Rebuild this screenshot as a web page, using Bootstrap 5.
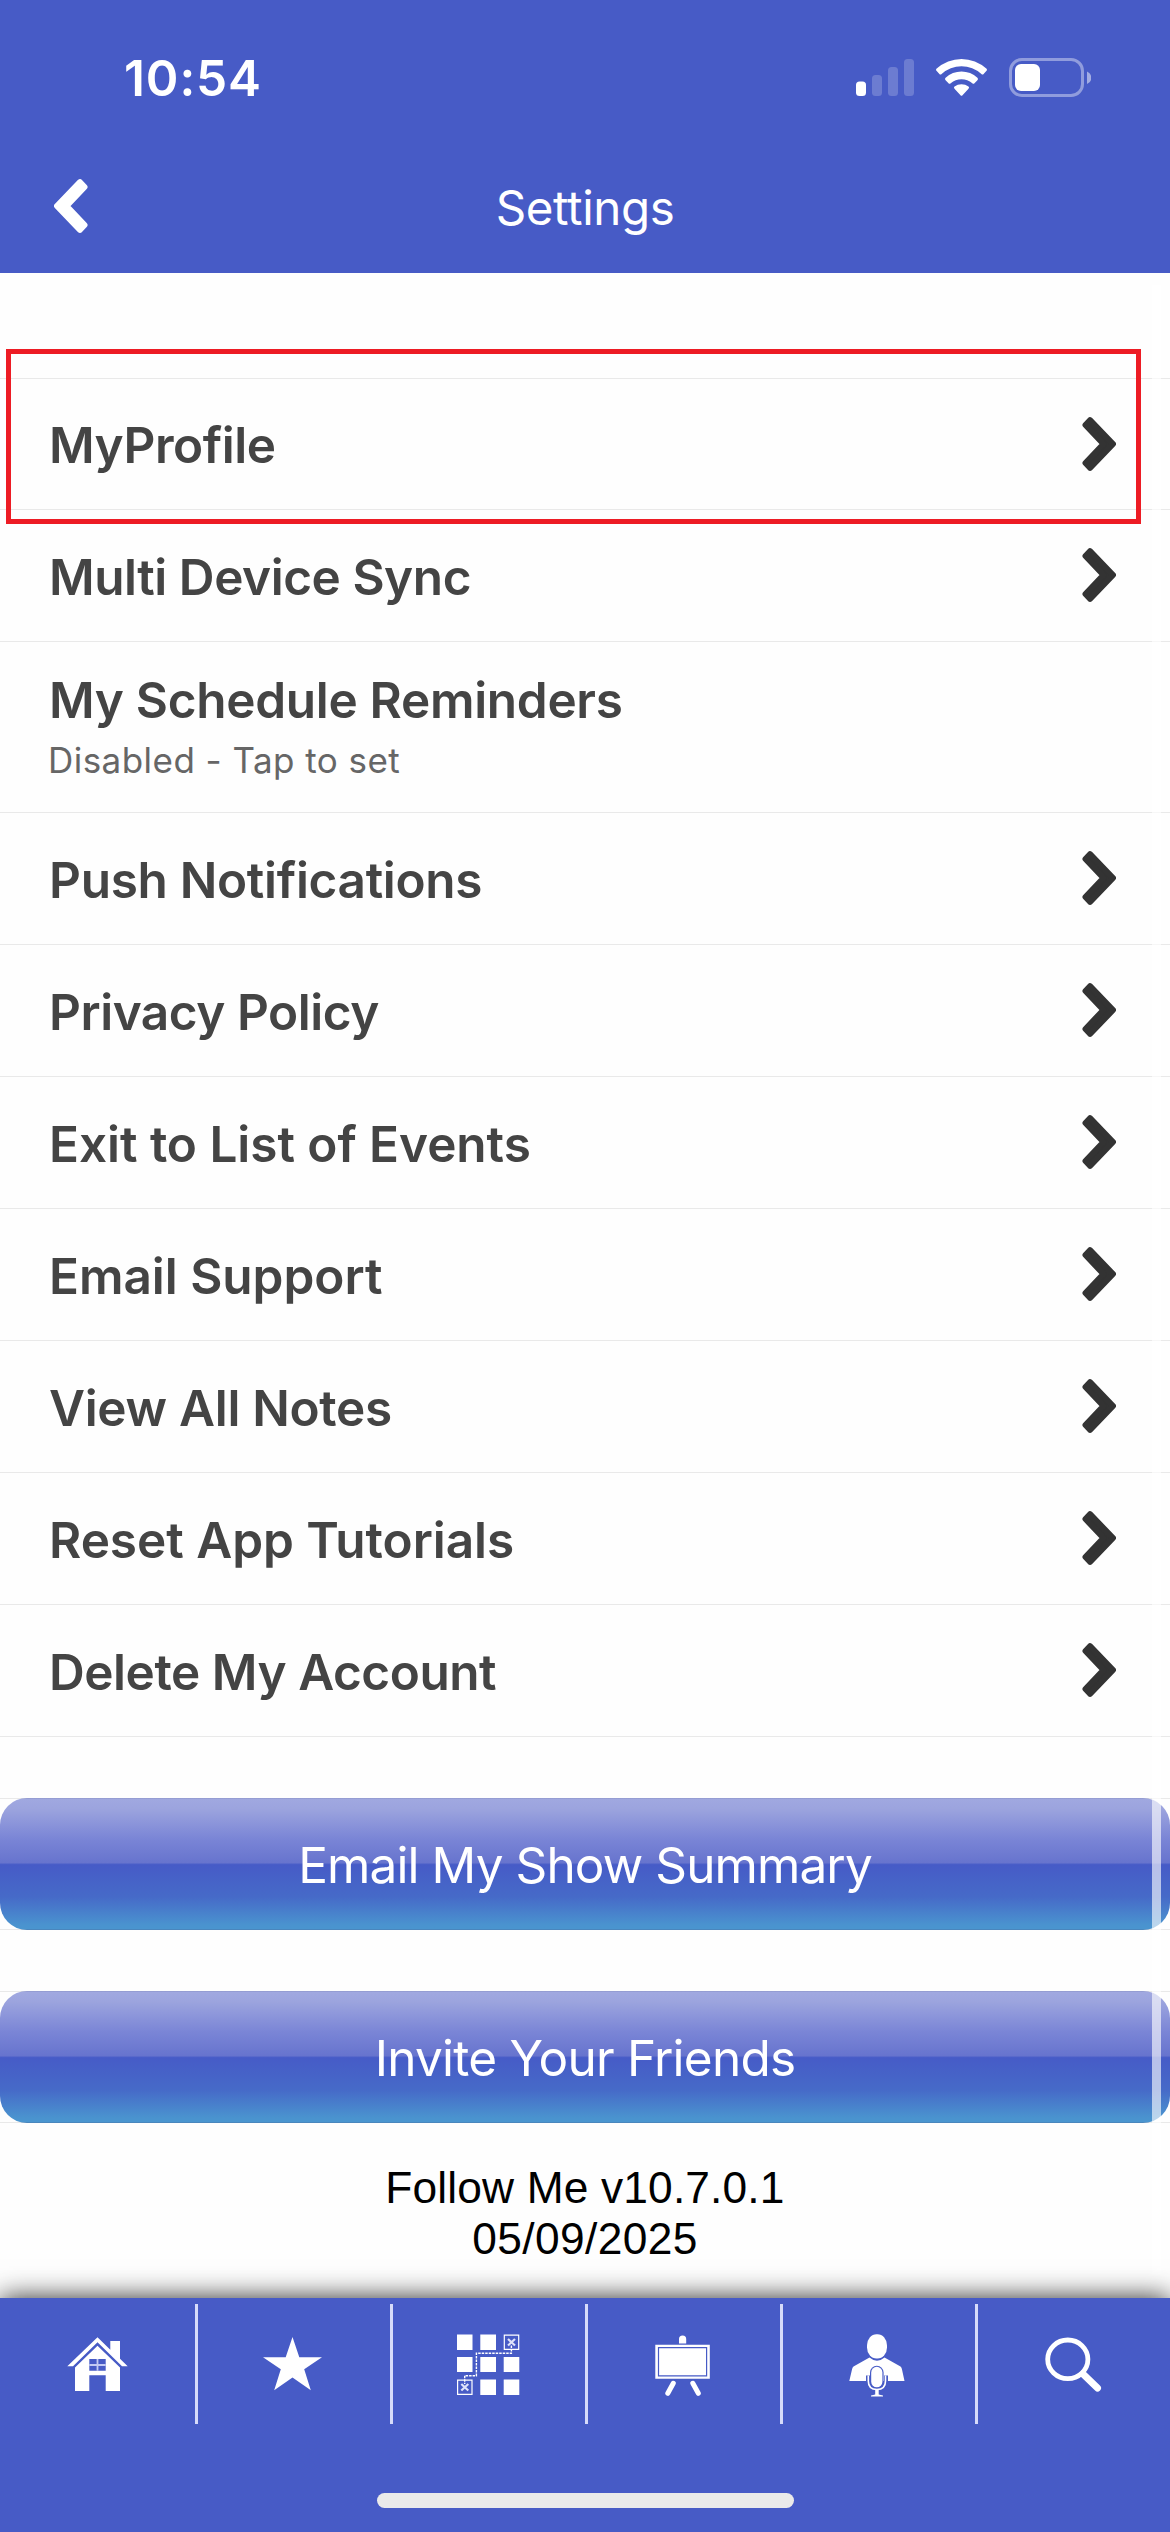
<!DOCTYPE html>
<html lang="en">
<head>
<meta charset="utf-8">
<meta name="viewport" content="width=device-width, initial-scale=1">
<title>Settings</title>
<link rel="stylesheet" href="https://cdn.jsdelivr.net/npm/bootstrap@5.3.0/dist/css/bootstrap.min.css">
<style>
  :root { --brand: #475bc6; --rule: #e9e9e9; }
  body { font-family: Inter, "Liberation Sans", sans-serif; background: #fefefe; overflow: hidden; }
  svg { display: block; }
  .screen { width: 1170px; height: 2532px; }
  .app-top { background: var(--brand); height: 273px; color: #fff; }
  .status { height: 141px; padding: 15px 79px 0 124px; }
  .clock { font-size: 49.5px; font-weight: 600; letter-spacing: .9px; line-height: 60px; }
  .title-bar { height: 132px; padding: 0 50px; }
  .title-bar h1 { font-size: 47.5px; font-weight: 400; letter-spacing: -.4px; line-height: 60px; padding-top: 2px; }
  .side { width: 60px; }
  .back { transform: scaleX(-1); margin-bottom: 2px; }

  .settings { margin-top: 105px; --bs-list-group-border-radius: 0; }
  .settings .list-group-item { height: 132px; padding: 2px 54px 0 49px; color: #444; background: transparent;
    border: 0; border-bottom: 1px solid var(--rule); font-size: 49.5px; line-height: 60px; font-weight: 600; letter-spacing: -.3px; }
  .settings .list-group-item:first-child { border-top: 1px solid var(--rule); }
  .settings .two-line { height: 171px; padding-top: 28px; }
  .settings .sub { font-size: 35px; font-weight: 400; line-height: 40px; margin-top: 10px; color: #666; letter-spacing: .46px; margin-left: -1px; }
  .chevron { color: #333; margin-bottom: 3px; }
  .tight { letter-spacing: -.45px; }
  .loose { letter-spacing: -.03px; }

  .btn-line { border-top: 1px solid var(--rule); border-bottom: 1px solid var(--rule); height: 132px; margin-top: 61px; }
  .btn-gloss { height: 132px; margin-top: -1px; padding: 2px 0 0; border: 0; border-radius: 27px / 27px; color: #fff;
    font-size: 49.5px; line-height: 60px; letter-spacing: -.9px;
    background: linear-gradient(#8f97cc 0, #a0a8e0 1.5px, #9ca4de 8%, #7a85d6 31%, #6774ce 49%, #465bc7 50.5%, #466ac8 75%, #4a93cf 96%, #4a95cf 130.5px, #4a7fb4 132px); }
  .btn-gloss.invite { letter-spacing: -.76px; }
  .version { padding-top: 39px; color: #000; font: 400 44.3px/51px "Liberation Sans", Arial, sans-serif; letter-spacing: .15px; }
  .version .date { letter-spacing: .4px; }

  .highlight { left: 6px; top: 349px; width: 1135px; height: 175px; border: 5px solid #ed1c24; }
  .scroll-thumb { left: 1152px; top: 285px; width: 9px; height: 1990px; background: rgba(255,255,255,.62); }

  .tab-bar { background: var(--brand); height: 234px; padding-top: 6px; box-shadow: 0 0 26px rgba(0,0,0,.85); }
  .tab { height: 120px; }
  .tab + .tab { box-shadow: inset 3px 0 #d6dbfa; }
  .home-bar { width: 417px; height: 15px; margin-top: 69px; background: #eaeaea; }
</style>
</head>
<body>
<svg class="d-none">
  <symbol id="chev" viewBox="0 0 34 56">
    <path d="M8 4.2 31 28 8 51.8 3.5 47 21.5 28 3.5 9Z" fill="currentColor" stroke="currentColor" stroke-width="6" stroke-linejoin="round"/>
  </symbol>
</svg>
<div class="screen position-relative d-flex flex-column overflow-hidden">
  <header class="app-top flex-shrink-0">
    <div class="status d-flex justify-content-between align-items-center">
      <span class="clock">10:54</span>
      <svg width="236" height="40" viewBox="855 58 236 40" fill="#fff">
        <rect x="856" y="81.5" width="10" height="14.5" rx="3.5"/>
        <g opacity=".2"><rect x="872" y="75" width="10" height="21" rx="3.5"/><rect x="888" y="67" width="10" height="29" rx="3.5"/><rect x="904" y="59" width="10" height="37" rx="3.5"/></g>
        <path d="M936.7 68.6a36.500 36.500 0 0 1 49.600 0q1.300 1.200 0 2.500l-2.700 2.900q-1 1-2.200 0a29.500 29.500 0 0 0-39.800 0q-1.200 1-2.200 0l-2.700-2.900q-1.300-1.300 0-2.500Z"/>
        <path d="M945.600 77.700a23.500 23.500 0 0 1 31.800 0q1.300 1.300 0 2.500l-2.900 3q-1 1-2.200 0a16.500 16.500 0 0 0-21.600 0q-1.200 1-2.200 0l-2.900-3q-1.300-1.200 0-2.500Z"/>
        <path d="M954.500 86.600a11.500 11.500 0 0 1 14 0q1.200 1 0 2.200l-6 6.500q-1 1-2 0l-6-6.500q-1.200-1.200 0-2.200Z"/>
        <rect x="1010.500" y="59.500" width="72" height="36" rx="11.500" fill="none" stroke="#fff" stroke-opacity=".4" stroke-width="3"/>
        <rect x="1015" y="64" width="25" height="27" rx="6"/>
        <path d="M1087 71.500a6.700 6.700 0 0 1 0 12.500Z" opacity=".5"/>
      </svg>
    </div>
    <div class="title-bar d-flex justify-content-between align-items-center">
      <a class="side text-white ps-1" href="#" aria-label="Back"><svg class="back" width="34" height="56"><use href="#chev"/></svg></a>
      <h1 class="m-0">Settings</h1>
      <span class="side"></span>
    </div>
  </header>

  <main class="flex-grow-1">
    <div class="list-group settings">
      <div class="list-group-item d-flex justify-content-between align-items-center"><span class="tight">MyProfile</span><svg class="chevron" width="34" height="56"><use href="#chev"/></svg></div>
      <div class="list-group-item d-flex justify-content-between align-items-center"><span class="tight">Multi Device Sync</span><svg class="chevron" width="34" height="56"><use href="#chev"/></svg></div>
      <div class="list-group-item two-line"><div>My Schedule Reminders</div><div class="sub">Disabled - Tap to set</div></div>
      <div class="list-group-item d-flex justify-content-between align-items-center"><span>Push Notifications</span><svg class="chevron" width="34" height="56"><use href="#chev"/></svg></div>
      <div class="list-group-item d-flex justify-content-between align-items-center"><span class="tight">Privacy Policy</span><svg class="chevron" width="34" height="56"><use href="#chev"/></svg></div>
      <div class="list-group-item d-flex justify-content-between align-items-center"><span class="loose">Exit to List of Events</span><svg class="chevron" width="34" height="56"><use href="#chev"/></svg></div>
      <div class="list-group-item d-flex justify-content-between align-items-center"><span class="loose">Email Support</span><svg class="chevron" width="34" height="56"><use href="#chev"/></svg></div>
      <div class="list-group-item d-flex justify-content-between align-items-center"><span>View All Notes</span><svg class="chevron" width="34" height="56"><use href="#chev"/></svg></div>
      <div class="list-group-item d-flex justify-content-between align-items-center"><span class="loose">Reset App Tutorials</span><svg class="chevron" width="34" height="56"><use href="#chev"/></svg></div>
      <div class="list-group-item d-flex justify-content-between align-items-center"><span class="tight">Delete My Account</span><svg class="chevron" width="34" height="56"><use href="#chev"/></svg></div>
    </div>
    <div class="btn-line"><button class="btn btn-gloss w-100 d-block">Email My Show Summary</button></div>
    <div class="btn-line"><button class="btn btn-gloss invite w-100 d-block">Invite Your Friends</button></div>
    <div class="version text-center">Follow Me v10.7.0.1<div class="date">05/09/2025</div></div>
  </main>

  <div class="scroll-thumb position-absolute"></div>
  <div class="highlight position-absolute"></div>

  <footer class="tab-bar flex-shrink-0 position-relative">
    <nav class="d-flex">
      <a class="tab" href="#" aria-label="Home"><svg width="195" height="120" viewBox="0 0 195 120" fill="#fff">
        <path d="M97.500 33.200 110.300 45.800V37H120V54.700L127.700 62.300H122L97.500 38.300 73 62.300H67.300Z"/>
        <path fill-rule="evenodd" d="M97.500 41.700 120 63.500V87H105.700V71.300H89.300V87H75V63.500ZM89.300 55V66.700H105.700V55Z"/>
        <path d="M89.300 61h16.400M97.500 55v11.700" stroke="#c3caf3" stroke-width="1.800"/>
      </svg></a>
      <a class="tab" href="#" aria-label="Favorites"><svg width="195" height="120" viewBox="0 0 195 120" fill="#fff">
        <path d="M97.500 33 104.300 53.300H127L109.200 65.300 115.800 86.300 97.500 73.500 79.200 86.300 85.800 65.300 68 53.300H90.700Z"/>
      </svg></a>
      <a class="tab" href="#" aria-label="Floor plan"><svg width="195" height="120" viewBox="0 0 195 120" fill="#fff">
        <path d="M67 30.500h15.500V46H67ZM90.300 30.500H106V46H90.300ZM67 53h15.500v15H67ZM90.300 53H106v15H90.300ZM113.700 53h15.600v15h-15.600ZM90.300 75.500H106V91H90.300ZM113.700 75.500h15.600V91h-15.600Z"/>
        <g fill="none" stroke="#fff"><path d="M114.300 31.100h14.400v14.300h-14.400ZM67.600 76.100H82v14.300H67.600Z" stroke-width="1.200"/>
        <path d="m118 35 7 6.500m0-6.500-7 6.500M71.300 80l7 6.500m0-6.500-7 6.500" stroke="#dfe3fa" stroke-width="2.200"/>
        <path d="M121.400 41.500V49.300H86.400V71.700H74.700V80" stroke-width="1.400" stroke-dasharray="2.500 1"/></g>
      </svg></a>
      <a class="tab" href="#" aria-label="Exhibitors"><svg width="195" height="120" viewBox="0 0 195 120" fill="#fff">
        <path d="M94 39.500V35a3.600 3.600 0 0 1 7.200 0v4.500ZM70.300 40.700h54.500v34H70.300Z"/>
        <path d="M73.500 43.600h48.100v28.300H73.500Z" fill="none" stroke="#475bc6" stroke-width="1.200"/>
        <path d="m88.300 79.300-5.500 10M107.800 79.300l5.500 10" stroke="#fff" stroke-width="5" stroke-linecap="round"/>
      </svg></a>
      <a class="tab" href="#" aria-label="Speakers"><svg width="195" height="120" viewBox="0 0 195 120" fill="#fff">
        <rect x="87" y="30.300" width="20" height="24.200" rx="9.500" ry="11"/>
        <path d="M89.500 53.500Q97 60 104.500 53.500L120.500 62.500Q121.700 63.500 122 65.500L124.500 77H69.300L72 65.500Q72.300 63.500 73.500 62.500Z"/>
        <path d="M88 71.500V77q0 9.800 9 9.800t9-9.800V71.500" fill="none" stroke="#475bc6" stroke-width="4"/>
        <rect x="90" y="61.700" width="13.600" height="22.800" rx="6.800" fill="#475bc6"/>
        <rect x="91.200" y="62.800" width="11.200" height="20.500" rx="5.600"/>
        <path d="M88.300 71.500V77q0 8.500 8.600 8.500t8.600-8.500V71.500" fill="none" stroke="#fff" stroke-width="1.600"/>
        <path d="M95.200 85.500h3.500v5l4.300 1v1H91v-1l4.200-1Z"/>
      </svg></a>
      <a class="tab" href="#" aria-label="Search"><svg width="195" height="120" viewBox="0 0 195 120" fill="none" stroke="#fff">
        <ellipse cx="92.800" cy="55.300" rx="20.100" ry="19.300" stroke-width="4.800"/>
        <path d="m108 70 14.500 14" stroke-width="7" stroke-linecap="round"/>
      </svg></a>
    </nav>
    <div class="home-bar rounded-pill mx-auto"></div>
  </footer>
</div>
<script src="https://cdn.jsdelivr.net/npm/bootstrap@5.3.0/dist/js/bootstrap.bundle.min.js"></script>
</body>
</html>
